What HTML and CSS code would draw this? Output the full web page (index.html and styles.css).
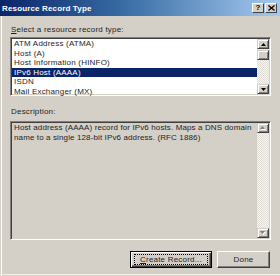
FILE: index.html
```html
<!DOCTYPE html>
<html lang="en">
<head>
    <meta charset="UTF-8">
    <title>Resource Record Type</title>
    <link rel="stylesheet" href="styles.css">
</head>
<body>
    <div class="window">
        <div class="titlebar">
            <span class="title">Resource Record Type</span>
            <div class="title-buttons">
                <span class="tbtn help">?</span>
                <span class="tbtn">
                    <svg width="7" height="6" viewBox="0 0 7 6"><path d="M0.5 0.5 L6.5 5.5 M6.5 0.5 L0.5 5.5" stroke="#000" stroke-width="1.3"/></svg>
                </span>
            </div>
        </div>
        <div class="content">
            <div class="label"><u>S</u>elect a resource record type:</div>
            <div class="field listbox">
                <ul class="items">
                    <li>ATM Address (ATMA)</li>
                    <li>Host (A)</li>
                    <li>Host Information (HINFO)</li>
                    <li class="selected">IPv6 Host (AAAA)</li>
                    <li>ISDN</li>
                    <li>Mail Exchanger (MX)</li>
                </ul>
                <div class="scrollbar">
                    <div class="sb-btn"><svg width="5" height="3" viewBox="0 0 5 3"><path d="M2.5 0 L5 3 L0 3 Z" fill="#000"/></svg></div>
                    <div class="sb-track">
                        <div class="sb-thumb"></div>
                    </div>
                    <div class="sb-btn"><svg width="5" height="3" viewBox="0 0 5 3"><path d="M0 0 L5 0 L2.5 3 Z" fill="#000"/></svg></div>
                </div>
            </div>
            <div class="label desc-label">Description:</div>
            <div class="field descbox">
                <div class="desc-text">Host address (AAAA) record for IPv6 hosts. Maps a DNS domain name to a single 128-bit IPv6 address. (RFC 1886)</div>
                <div class="scrollbar disabled">
                    <div class="sb-btn"><svg width="6" height="4" viewBox="0 0 6 4"><path d="M3.5 1 L6 4 L1 4 Z" fill="#fff"/><path d="M2.5 0 L5 3 L0 3 Z" fill="#808080"/></svg></div>
                    <div class="sb-track"></div>
                    <div class="sb-btn"><svg width="6" height="4" viewBox="0 0 6 4"><path d="M1 1 L6 1 L3.5 4 Z" fill="#fff"/><path d="M0 0 L5 0 L2.5 3 Z" fill="#808080"/></svg></div>
                </div>
            </div>
            <div class="buttons">
                <button class="btn default"><span class="focus"><u>C</u>reate Record...</span></button>
                <button class="btn done">Done</button>
            </div>
            <div class="edge"></div>
        </div>
    </div>
</body>
</html>
```

FILE: styles.css
```css
* {
    box-sizing: border-box;
}
body {
    margin: 0;
    background: #d4d0c8;
    font-family: 'Liberation Sans', Arial, sans-serif;
    font-size: 8px;
    letter-spacing: 0.2px;
    color: #1e1e1e;
}
.window {
    width: 280px;
    height: 276px;
    background: #d4d0c8;
    overflow: hidden;
}
.titlebar {
    height: 16px;
    display: flex;
    align-items: center;
    justify-content: space-between;
    padding: 0 3px 0 2px;
    background: linear-gradient(to right, #0a246a, #3a6ea5 45%, #a6caf0);
}
.title {
    color: #fff;
    font-weight: bold;
    font-size: 8px;
    letter-spacing: 0.15px;
}
.title-buttons {
    display: flex;
    gap: 1px;
}
.tbtn {
    width: 12px;
    height: 10px;
    display: flex;
    align-items: center;
    justify-content: center;
    background: #d4d0c8;
    border-top: 1px solid #fff;
    border-left: 1px solid #fff;
    border-right: 1px solid #404040;
    border-bottom: 1px solid #404040;
    font-weight: bold;
    font-size: 8px;
    color: #000;
    line-height: 1;
}
.content {
    padding: 9px 9px 0 10px;
    box-shadow: inset 1px 0 #d4d0c8, inset 2px 0 #fff;
    height: 260px;
    display: flex;
    flex-direction: column;
}
.label {
    line-height: 10px;
    height: 10px;
    padding-left: 1px;
    margin-bottom: 2px;
}
.desc-label {
    margin-top: 11px;
    margin-bottom: 4px;
}
.field {
    display: flex;
    border-top: 1px solid #808080;
    border-left: 1px solid #808080;
    border-right: 1px solid #fff;
    border-bottom: 1px solid #fff;
    box-shadow: inset 1px 1px #404040, inset -1px -1px #d4d0c8;
    padding: 1px;
}
.listbox {
    height: 59px;
    background: #fff;
}
.items {
    flex: 1;
    list-style: none;
    margin: 0;
    padding: 0;
}
.items li {
    height: 9.5px;
    line-height: 9.5px;
    padding-left: 2px;
    white-space: nowrap;
}
.items li.selected {
    background: #0a246a;
    color: #fff;
}
.scrollbar {
    width: 12px;
    display: flex;
    flex-direction: column;
}
.sb-btn, .sb-thumb {
    height: 10px;
    display: flex;
    align-items: center;
    justify-content: center;
    background: #d4d0c8;
    border-top: 1px solid #d4d0c8;
    border-left: 1px solid #d4d0c8;
    border-right: 1px solid #404040;
    border-bottom: 1px solid #404040;
    box-shadow: inset 1px 1px #fff, inset -1px -1px #808080;
}
.sb-track {
    flex: 1;
    padding-top: 1px;
    background: repeating-conic-gradient(#f6f5f2 0 25%, #e0ddd7 0 50%) 0 0 / 2px 2px;
}
.descbox {
    height: 119px;
    background: #d4d0c8;
}
.desc-text {
    flex: 1;
    line-height: 10px;
    padding: 0 0 0 2px;
    letter-spacing: 0.12px;
}
.buttons {
    display: flex;
    justify-content: flex-end;
    gap: 5px;
    margin-top: 11px;
    margin-right: 1px;
}
.btn {
    height: 17px;
    padding: 0;
    font-family: inherit;
    font-size: 8px;
    letter-spacing: 0.2px;
    color: #1e1e1e;
    background: #d4d0c8;
    border-top: 1px solid #fff;
    border-left: 1px solid #fff;
    border-right: 1px solid #404040;
    border-bottom: 1px solid #404040;
    box-shadow: inset -1px -1px #808080;
}
.btn.default {
    width: 82px;
    border: 1px solid #000;
    box-shadow: inset 1px 1px #fff, inset -1px -1px #404040, inset -2px -2px #808080;
    padding: 2px 3px;
}
.btn.done {
    width: 53px;
}
.focus {
    display: block;
    height: 11px;
    line-height: 9px;
    border: 1px dotted #000;
    text-align: center;
}
.edge {
    height: 1px;
    margin: 6px -9px 0 -10px;
    background: #f2f1ee;
}
```
